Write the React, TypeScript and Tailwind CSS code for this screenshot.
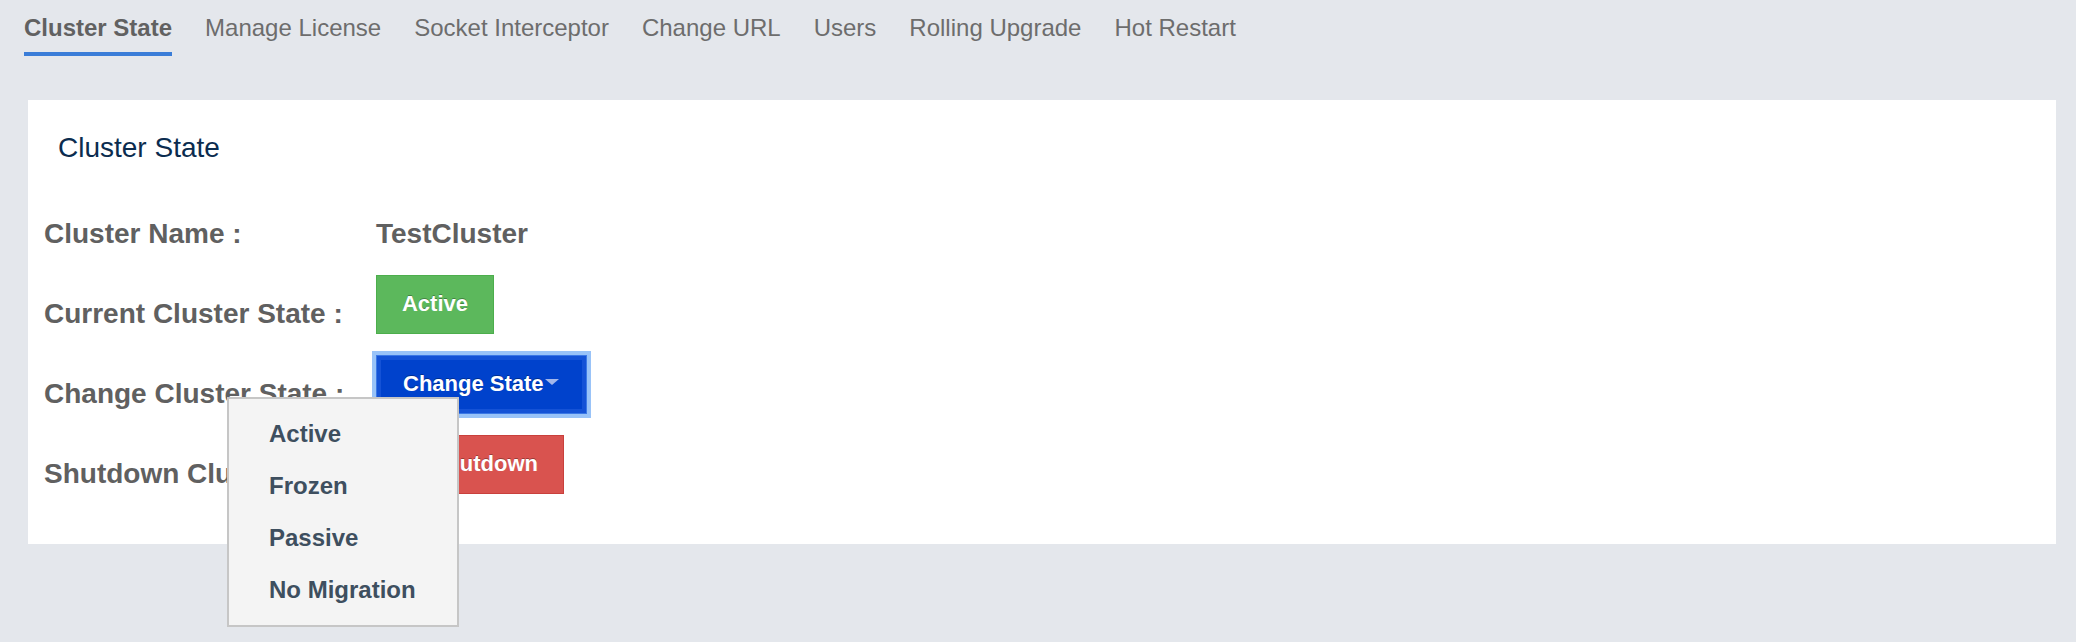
import React, { useState } from 'react';

const TABS = [
	'Cluster State',
	'Manage License',
	'Socket Interceptor',
	'Change URL',
	'Users',
	'Rolling Upgrade',
	'Hot Restart',
];

const STATES = ['Active', 'Frozen', 'Passive', 'No Migration'];

const btnText = 'text-[22px] leading-[22px] font-bold text-white [text-shadow:0_-1px_0_rgba(0,0,0,0.3)]';

const Row: React.FC<{ label: string; children: React.ReactNode }> = ({ label, children }) => (
	<div className="flex h-[80px] items-center">
		<div className="w-[332px] pt-[20px] text-[28px] font-bold leading-[28px] text-[#606060]">{label}</div>
		{children}
	</div>
);

const App: React.FC = () => {
	const [activeTab, setActiveTab] = useState('Cluster State');
	const [menuOpen, setMenuOpen] = useState(true);

	return (
		<div className="min-h-[642px] bg-[#e4e7ec] font-['Liberation_Sans',Arial,sans-serif]">
			<nav className="flex gap-[33px] pl-[24px]">
				{TABS.map((tab) => (
					<button
						key={tab}
						type="button"
						onClick={() => setActiveTab(tab)}
						className={
							tab === activeTab
								? 'border-b-4 border-[#3a7dd8] pt-[16px] pb-[12px] text-[24px] font-bold leading-[24px] text-[#616161]'
								: 'border-b-4 border-transparent pt-[16px] pb-[12px] text-[24px] leading-[24px] text-[#6d6d6d]'
						}
					>
						{tab}
					</button>
				))}
			</nav>

			<main className="pt-[44px] pr-[20px] pl-[28px]">
				<section className="bg-white pt-[34px] pb-[40px] pl-[16px]">
					<h2 className="pl-[14px] text-[28px] leading-[28px] text-[#0b2c4f]">Cluster State</h2>

					<div className="mt-[22px]">
						<Row label="Cluster Name :">
							<span className="pt-[20px] text-[28px] font-bold leading-[28px] text-[#606060]">TestCluster</span>
						</Row>

						<Row label="Current Cluster State :">
							<div className={`flex h-[59px] w-[118px] items-center justify-center border border-[#4cae4c] bg-[#5cb85c] ${btnText}`}>
								Active
							</div>
						</Row>

						<Row label="Change Cluster State :">
							<div className="relative">
								<button
									type="button"
									onClick={() => setMenuOpen((v) => !v)}
									className={`flex h-[59px] w-[211px] items-center border border-[#3b78e6] bg-[#0042cc] pl-[26px] shadow-[0_0_0_4px_rgba(110,170,245,0.7),inset_0_0_0_4px_#1452d6] ${btnText}`}
								>
									Change State
									<span className="mb-[4px] ml-[1px] h-0 w-0 border-x-[7px] border-t-[6px] border-x-transparent border-t-[#a3b7ea]" />
								</button>

								{menuOpen && (
									<ul className="absolute top-[42px] left-[-149px] z-10 w-[232px] border-2 border-[#c6c6c6] bg-[#f4f4f4] pt-[9px] pb-[9px]">
										{STATES.map((state) => (
											<li
												key={state}
												onClick={() => setMenuOpen(false)}
												className="cursor-pointer pl-[40px] text-[24px] font-bold leading-[52px] text-[#3e4f5f]"
											>
												{state}
											</li>
										))}
									</ul>
								)}
							</div>
						</Row>

						<Row label="Shutdown Cluster :">
							<div className={`flex h-[59px] w-[188px] items-center justify-end border border-[#c9403c] bg-[#d9534f] pr-[25px] ${btnText}`}>
								Shutdown
							</div>
						</Row>
					</div>
				</section>
			</main>
		</div>
	);
};

export default App;
